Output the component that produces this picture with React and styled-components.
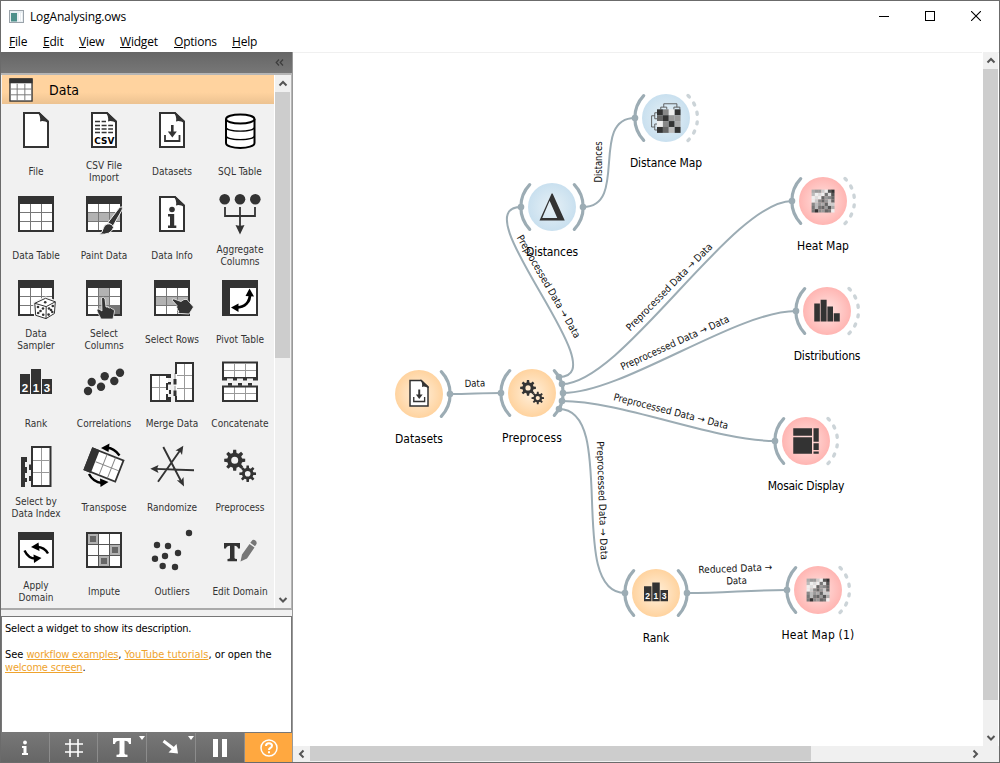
import React from "react";
import styled, { createGlobalStyle } from "styled-components";

const INK = "#333";
const LINK = "#9cacb4";
const TAHOMA = `"DejaVu Sans Condensed", "DejaVu Sans", sans-serif`;

const GlobalStyle = createGlobalStyle`
  * { box-sizing: border-box; }
  body { margin: 0; background: #fff; overflow: hidden; }
`;

const Window = styled.div`
  width: 1000px;
  height: 763px;
  display: flex;
  flex-direction: column;
  border: 1px solid #6b6b6b;
  background: #fff;
  color: #000;
  font-family: ${TAHOMA};
  font-stretch: condensed;
  overflow: hidden;
`;

const TitleBar = styled.header`
  height: 30px;
  flex: none;
  display: flex;
  align-items: center;
  padding-left: 8px;
  font: 12px "Open Sans", "Noto Sans", sans-serif;
`;

const Title = styled.span`
  flex: 1;
  margin-left: 6px;
  letter-spacing: -0.17px;
`;

const WindowButton = styled.span`
  width: 46px;
  height: 29px;
  display: flex;
  align-items: center;
  justify-content: center;
`;

const MenuBar = styled.nav`
  height: 21px;
  flex: none;
  display: flex;
  align-items: center;
  padding-left: 8px;
  font: 12px "Open Sans", "Noto Sans", sans-serif;
`;

const MenuItem = styled.div`
  width: ${(p) => p.$w}px;
  letter-spacing: -0.2px;
  white-space: nowrap;
  &::first-letter { text-decoration: underline; }
`;

const Body = styled.div`
  flex: 1;
  display: flex;
  min-height: 0;
`;

const Sidebar = styled.aside`
  width: 292px;
  flex: none;
  display: flex;
  flex-direction: column;
  border-right: 1px solid #999;
  background: #f1f1f1;
`;

const DockHeader = styled.div`
  height: 21px;
  flex: none;
  display: flex;
  align-items: center;
  justify-content: flex-end;
  padding-right: 8px;
  background: linear-gradient(#666, #777);
`;

const Palette = styled.div`
  height: 537px;
  flex: none;
  display: flex;
  border-top: 2px solid #b5b5b5;
  border-bottom: 2px solid #aaa;
  border-right: 1px solid #b5b5b5;
`;

const PaletteContent = styled.div`
  width: 273px;
  padding-left: 1px;
`;

const CategoryHeader = styled.div`
  height: 29px;
  display: flex;
  align-items: center;
  gap: 16px;
  padding-left: 7px;
  background: linear-gradient(#ffd39f 60%, #ecc291);
  font-size: 14px;
`;

const WidgetGrid = styled.div`
  display: grid;
  grid-template-columns: repeat(4, 68px);
  grid-auto-rows: 84px;
`;

const WidgetCell = styled.div`
  display: flex;
  flex-direction: column;
  align-items: center;
  padding-top: 3px;
`;

const WidgetIcon = styled.svg`
  width: 48px;
  height: 48px;
  flex: none;
`;

const WidgetLabel = styled.div`
  height: 33px;
  flex: none;
  display: flex;
  align-items: center;
  padding-top: 1px;
  text-align: center;
  white-space: pre;
  font-size: 10px;
  line-height: 12px;
  color: #333;
`;

const VScroll = styled.div`
  width: 16px;
  flex: none;
  display: flex;
  flex-direction: column;
  align-items: center;
  background: #f0f0f0;
  border-left: 1px solid #fff;
`;

const VThumb = styled.div`
  width: 100%;
  height: ${(p) => p.$h}px;
  background: #cdcdcd;
`;

const ScrollArrow = styled.div`
  width: ${(p) => p.$w || 15}px;
  height: ${(p) => p.$h || 17}px;
  flex: none;
  display: flex;
  align-items: center;
  justify-content: center;
`;

const Spacer = styled.div`
  flex: 1;
`;

const Description = styled.div`
  margin-top: 6px;
  height: 117px;
  flex: none;
  padding: 5px 3px;
  border: 1px solid #777;
  background: #fff;
  font-size: 11px;
  line-height: 13px;
  white-space: nowrap;
`;

const Hint = styled.p`
  margin: 0 0 13px;
  letter-spacing: ${(p) => p.$track}px;
`;

const DocLink = styled.a`
  color: #efa32d;
  text-decoration: underline;
  letter-spacing: ${(p) => p.$track}px;
`;

const ToolBar = styled.div`
  height: 29px;
  flex: none;
  display: flex;
  background: linear-gradient(#777, #666);
`;

const ToolButton = styled.div`
  width: ${(p) => p.$w}px;
  display: flex;
  align-items: center;
  justify-content: center;
  background: ${(p) => (p.$active ? "#ffa840" : "transparent")};
  border-right: ${(p) => (p.$active ? "none" : "1px solid #8c8c8c")};
`;

const CanvasPane = styled.main`
  flex: 1;
  display: flex;
  flex-direction: column;
  box-shadow: inset 0 1px #f0f0f0;
`;

const CanvasRow = styled.div`
  flex: 1;
  display: flex;
`;

const Canvas = styled.div`
  width: 689px;
  position: relative;
`;

const HScroll = styled.div`
  height: 16px;
  flex: none;
  display: flex;
  background: #f0f0f0;
`;

const HThumb = styled.div`
  width: 501px;
  height: 15px;
  background: #cdcdcd;
`;

const Links = styled.svg`
  position: absolute;
  left: 0;
  top: 0;
`;

const Node = styled.div`
  position: absolute;
  left: ${(p) => p.$x - 293 - 50}px;
  top: ${(p) => p.$y - 52 - 34}px;
  width: 100px;
  display: flex;
  flex-direction: column;
  align-items: center;
`;

const NodeLabel = styled.div`
  margin-top: 3px;
  font-size: 12px;
  line-height: 16px;
  white-space: nowrap;
  letter-spacing: ${(p) => p.$track ?? -0.1}px;
`;

/* ---------- icons, drawn on a 48 x 48 grid ---------- */

const Page = ({ children }) => (
  <g>
    <path d="M12 6H27L36 15V40H12Z" fill="#fff" stroke={INK} strokeWidth="2" />
    <path d="M25.5 5H27L37 14V16Q31 13 28 14.5Q29 9 25.5 5Z" fill={INK} />
    {children}
  </g>
);

const Table = ({ children, over }) => (
  <g>
    <rect x="7" y="6" width="34" height="34" fill="#fff" />
    {children}
    <path d="M8 21.5H40M8 30.5H40M18.5 13V39M29.5 13V39" stroke="#777" strokeWidth="1" fill="none" />
    <rect x="7" y="6" width="34" height="34" fill="none" stroke={INK} strokeWidth="2" />
    <rect x="6" y="5" width="36" height="8" fill={INK} />
    {over}
  </g>
);

const gearPath = (cx, cy, r, inner, teeth) => {
  let d = "";
  for (let i = 0; i < teeth; i++) {
    const a = (i / teeth) * Math.PI * 2;
    const s = Math.PI / teeth;
    [[-0.62, inner], [-0.36, r], [0.36, r], [0.62, inner]].forEach(([k, rad], j) => {
      const t = a + k * s;
      d += `${i === 0 && j === 0 ? "M" : "L"}${(cx + rad * Math.cos(t)).toFixed(2)} ${(cy + rad * Math.sin(t)).toFixed(2)}`;
    });
  }
  return d + "Z";
};

const Gears = () => (
  <g fill={INK}>
    <path fillRule="evenodd" d={gearPath(18.7, 17.3, 10.6, 7.6, 8) + "M22.2 17.3a3.5 3.5 0 1 0-7 0a3.5 3.5 0 1 0 7 0Z"} />
    <path fillRule="evenodd" d={gearPath(31.7, 30.7, 8.4, 5.8, 8) + "M34.5 30.7a2.8 2.8 0 1 0-5.6 0a2.8 2.8 0 1 0 5.6 0Z"} />
  </g>
);

const Podium = () => (
  <g>
    <path d="M8 15H18V35H8ZM19 10H29V35H19ZM30 20H40V35H30Z" fill={INK} />
    <g fill="#fff" fontFamily="Liberation Sans, sans-serif" fontWeight="700" fontSize="11.5" textAnchor="middle">
      <text x="13" y="32.5">2</text>
      <text x="24" y="32.5">1</text>
      <text x="35" y="32.5">3</text>
    </g>
  </g>
);

const Dots = ({ points, r }) => (
  <g fill={INK}>{points.map(([x, y]) => <circle key={`${x}-${y}`} cx={x} cy={y} r={r} />)}</g>
);

const Download = () => (
  <Page>
    <path d="M24.3 18V26" stroke={INK} strokeWidth="2.6" />
    <path d="M19.8 24.5H28.8L24.3 30.5Z" fill={INK} />
    <path d="M17 28V34H31.5V28" fill="none" stroke={INK} strokeWidth="1.8" />
  </Page>
);

const shade = (c) => `#${c}${c}${c}`;

const Heat = () => (
  <g>
    {["a99ce53", "bede7d5", "ede6986", "ec869c6", "8b9a6cc", "7b7695a", "738967e"].map((row, y) =>
      [...row].map((c, x) => (
        <rect key={`${x}${y}`} x={8.8 + x * 4.35} y={8.8 + y * 4.35} width="4.45" height="4.45" fill={shade(c)} />
      ))
    )}
  </g>
);

const DistanceMap = () => (
  <g>
    {["38e3", "6399", "e83a", "36b3"].map((row, y) =>
      [...row].map((c, x) => (
        <rect key={`${x}${y}`} x={12 + x * 7.85} y={12.4 + y * 7.85} width="7.9" height="7.9" fill={shade(c)} />
      ))
    )}
    <path
      d="M17 12.4V9.5H25V12.4M34.5 12.4V9.5H42.5V12.4M21 9.5V5H38.5V9.5M12 17H9V25H12M12 32H9V40H12M9 21H4.8V36H9"
      fill="none"
      stroke="#555"
      strokeWidth="1.2"
    />
  </g>
);

const icons = {
  file: <Page />,
  csv: (
    <Page>
      <path d="M15 14.5H26M15 18.5H33M15 22H33M15 25.5H33" stroke={INK} strokeWidth="1.7" strokeDasharray="5 1.6" />
      <text x="24.3" y="36.6" fontFamily="DejaVu Sans, sans-serif" fontWeight="700" fontSize="9" textAnchor="middle" textLength="20" lengthAdjust="spacingAndGlyphs">CSV</text>
    </Page>
  ),
  datasets: <Download />,
  sql: (
    <g fill="#fff" stroke="#000" strokeWidth="2">
      <path d="M10 12V36C10 42.5 38.5 42.5 38.5 36V12" />
      <path d="M10 20C10 25.5 38.5 25.5 38.5 20M10 28.5C10 34 38.5 34 38.5 28.5" fill="none" strokeWidth="1.2" />
      <ellipse cx="24.25" cy="12" rx="14.25" ry="4.6" />
    </g>
  ),
  table: <Table />,
  paint: (
    <Table
      over={
        <g stroke="#f2f2f2" strokeWidth="1">
          <path d="M39.5 16.5Q43.5 14.5 42 19L33 35L28 31.5Z" fill={INK} />
          <path d="M27 33Q32 32 33.5 36.5Q31 44.5 19 43Q23 41.5 23 38Q24 34 27 33Z" fill={INK} />
        </g>
      }
    >
      <rect x="8" y="22" width="32" height="9" fill="#b2b2b2" />
    </Table>
  ),
  info: (
    <Page>
      <circle cx="24" cy="18.5" r="2.8" fill={INK} />
      <path d="M20 23H26.2V34.5H28.3V37H20V34.5H22V25.5H20Z" fill={INK} />
    </Page>
  ),
  aggregate: (
    <g>
      <Dots r={5.3} points={[[8.7, 8.2], [24, 8.2], [39.3, 8.2]]} />
      <path d="M9 16V25H39V16M24 16V36" fill="none" stroke={INK} strokeWidth="1.8" />
      <path d="M19.5 34Q24 35.5 28.5 34L24 43.5Z" fill={INK} />
    </g>
  ),
  sampler: (
    <Table
      over={
        <g>
          <path d="M33.5 23L43.5 26.5L42.5 39L34 44L23.5 40.5L22.5 28Z" fill="#fff" stroke="#f2f2f2" strokeWidth="3" />
          <path d="M33.5 23.3L43.3 26.8L42.4 38.5L34 43.6L23.7 40.3L22.8 28.3ZM22.8 28.3L34.2 31.6L43.3 26.8M34.2 31.6L34 43.6" fill="#fff" stroke={INK} strokeWidth="1" strokeLinejoin="round" />
          <Dots r={1.3} points={[[33.2, 27.3], [26, 32], [31, 33.5], [28.5, 36], [26.2, 38], [31.2, 39.8], [37, 33.5], [40.8, 31], [39, 35], [36.6, 39.6], [40.3, 37]]} />
        </g>
      }
    />
  ),
  columns: (
    <Table
      over={
        <path d="M21.5 23Q23.5 21 25 24L26 32Q28 31.5 29 33Q31 32 32 34Q34 33.5 34.5 36L33 44H21L17.5 37Q16 33.5 19 34L22 36Z" fill={INK} stroke="#f2f2f2" strokeWidth=".8" />
      }
    >
      <rect x="18.5" y="13" width="11" height="27" fill="#b2b2b2" />
      <rect x="30" y="31" width="11" height="9" fill="#777" />
    </Table>
  ),
  rows: (
    <Table
      over={
        <path d="M24.5 25.5Q23.5 23.5 26 24L33 26.5Q36 23.5 39 24.5L45.5 32L41 39L32.5 38.5Q28.5 38.5 31 36Q28 35.5 29.5 33.5Q28 32.5 29 30.5Z" fill={INK} stroke="#f2f2f2" strokeWidth=".8" />
      }
    >
      <rect x="8" y="22" width="32" height="9" fill="#b2b2b2" />
    </Table>
  ),
  pivot: (
    <g>
      <rect x="6" y="5" width="36" height="36" fill={INK} />
      <rect x="14" y="13" width="26" height="26" fill="#fff" />
      <path d="M34 18C34.5 27 29 32.5 20 32.5" fill="none" stroke="#000" strokeWidth="2.8" />
      <path d="M33.5 13.5L38 21.5L29.5 21Z M15 32.5L22.5 28.5V37Z" fill="#000" />
    </g>
  ),
  rank: <Podium />,
  correlations: <Dots r={4.2} points={[[8, 32], [11.7, 23], [21, 27.7], [24.7, 17.3], [34.3, 22], [40, 13.7]]} />,
  merge: (
    <g>
      <path d="M20 16H3V42H20" fill="#fff" stroke={INK} strokeWidth="2" />
      <path d="M11.5 17V41M4 28.5H20" stroke="#999" strokeWidth="1" />
      <path d="M18 15H23V19H20V23H23V25.5H20V31H23V35H20V38H23V43H18V35H21V31H18V24H20V19H18Z" fill={INK} />
      <path d="M28 14V4H45V42H28V37" fill="#fff" stroke={INK} strokeWidth="2" />
      <path d="M36.5 5V41M29 16.5H44M29 29.5H44" stroke="#999" strokeWidth="1" />
      <path d="M27 14V22M27 27V34" stroke="#999" strokeWidth="1" />
      <path d="M25.5 20H28.5V25.5H25.5ZM25.5 31.5H28.5V37H25.5ZM27 3H29V15H27Z" fill={INK} />
    </g>
  ),
  concatenate: (
    <g fill="#fff" stroke={INK} strokeWidth="2">
      <path d="M7 20V3.5H41V20" />
      <path d="M8 11.5H40M18.5 4V18M29.5 4V18" stroke="#999" strokeWidth="1" />
      <path d="M7 27V42H41V27" />
      <path d="M8 34.5H40M18.5 28V41M29.5 28V41" stroke="#999" strokeWidth="1" />
      <path d="M6 18.8H42" strokeWidth="1.6" />
      <path d="M6 20.2H11M17 20.2H21M27 20.2H31M37 20.2H42" strokeWidth="2.6" />
      <path d="M6 27.5H42" strokeWidth="1.8" />
      <path d="M12 25.4H16M22 25.4H26M32 25.4H36" strokeWidth="2.8" />
    </g>
  ),
  index: (
    <g>
      <path d="M9 14H15V19H13V24H15V30H13V35H15V39H13V44H9Z" fill={INK} />
      <rect x="20" y="4" width="18.5" height="39" fill="#fff" stroke={INK} strokeWidth="2" />
      <path d="M29.5 5V42M21 17.5H38M21 29.5H38" stroke="#999" strokeWidth="1" />
      <path d="M17 21.5H20V27H17ZM17 33H20V38H17Z" fill={INK} />
    </g>
  ),
  transpose: (
    <g>
      <g transform="rotate(21.5 24 22)">
        <rect x="7.5" y="10.7" width="33" height="22.6" fill="#fff" stroke={INK} strokeWidth="1.8" />
        <rect x="6.6" y="9.8" width="8" height="24.4" fill={INK} />
        <path d="M23 11V33M32 11V33M15 22H40" stroke="#888" strokeWidth="1" />
      </g>
      <path d="M39.5 12.5Q34 5 27 4.8M9 31Q13 39 22 40" fill="none" stroke="#000" strokeWidth="2.4" />
      <path d="M21 5L29.5 .5L28.5 9ZM28.5 39L20.5 44L20 35.5Z" fill="#000" />
    </g>
  ),
  randomize: (
    <g>
      <path d="M15.3 4L33.5 39M10 38.7L32 7.5M46 27.3L7 25.9" stroke={INK} strokeWidth="1.9" fill="none" />
      <path d="M36 43.5L28.8 37.2L33 37.5L35.5 34ZM35.3 2.7L34 12L31.8 8.3L27.5 7.5ZM2.3 25.7L10.5 22L9 26L10.5 30Z" fill={INK} />
    </g>
  ),
  preprocess: <Gears />,
  apply: (
    <g>
      <rect x="7" y="6" width="34" height="34" fill="#fff" stroke={INK} strokeWidth="2" />
      <rect x="6" y="5" width="36" height="8" fill={INK} />
      <path d="M36 26.5Q32 19.5 24 20M12.5 23.5Q16.5 32 24.5 31.5" fill="none" stroke="#000" strokeWidth="2.4" />
      <path d="M19 20L26.5 15.5L27.5 24ZM29.5 31L22 36L21.5 27.5Z" fill="#000" />
    </g>
  ),
  impute: (
    <g>
      <rect x="7" y="6" width="34" height="34" fill="#fff" />
      <path d="M7 6H18V17H7ZM30 17H41V28H30ZM18.5 28H29.5V40H18.5Z" fill="#b2b2b2" />
      <path d="M10 9H16V15H10ZM32 20H38V26H32ZM21 31H27V37H21Z" fill="#666" />
      <path d="M8 17.5H40M8 28.5H40M18.5 7V39M29.5 7V39" stroke="#555" strokeWidth="1" />
      <rect x="7" y="6" width="34" height="34" fill="none" stroke={INK} strokeWidth="2" />
    </g>
  ),
  outliers: <Dots r={3.2} points={[[41, 6], [9, 18], [20, 19], [30, 26], [17, 29], [7, 31.7], [14.7, 39], [27, 40]]} />,
  edit: (
    <g>
      <path d="M8 16H24V21.5H22Q21.5 18.7 18.5 18.7V31Q18.5 32 21 32V34.3H11.5V32Q14 32 14 31V18.7Q10.5 18.7 10 21.5H8Z" fill={INK} />
      <path d="M24.5 34.5L26 27.5L33.5 17L38.5 20.5L31 31.5Z M34.3 15.8L36.5 13Q38 12.3 40 14Q41 15.5 40.5 17L39 19.3Z" fill="#777" />
    </g>
  ),
  delta: <path fillRule="evenodd" d="M23.5 6H24.8L41 42H7.3ZM20.8 15.5L11 38.5H31Z" fill={INK} />,
  distanceMap: <DistanceMap />,
  heat: <Heat />,
  distributions: <path d="M6 17H13.5V41H6ZM14.5 12H22.5V41H14.5ZM23.5 21H31V41H23.5ZM32 30H40V41H32Z" fill={INK} transform="translate(1 -3)" />,
  mosaic: <path d="M7 7H32V17H7ZM7 19H32V41H7ZM34 7H41V25H34ZM34 27H41V36H34ZM34 38H41V41H34Z" fill={INK} />,
};

const Chevron = ({ dir }) => {
  const paths = { up: "M1.5 6.5L5 3L8.5 6.5", down: "M1.5 3L5 6.5L8.5 3", left: "M6.5 1.5L3 5L6.5 8.5", right: "M3.5 1.5L7 5L3.5 8.5" };
  return (
    <svg width="10" height="10" viewBox="0 0 10 10">
      <path d={paths[dir]} fill="none" stroke="#555" strokeWidth="2" />
    </svg>
  );
};

/* ---------- data ---------- */

const menu = [["File", 34], ["Edit", 36], ["View", 41], ["Widget", 54], ["Options", 58], ["Help", 40]];

const widgets = [
  ["file", "File"], ["csv", "CSV File\nImport"], ["datasets", "Datasets"], ["sql", "SQL Table"],
  ["table", "Data Table"], ["paint", "Paint Data"], ["info", "Data Info"], ["aggregate", "Aggregate\nColumns"],
  ["sampler", "Data\nSampler"], ["columns", "Select\nColumns"], ["rows", "Select Rows"], ["pivot", "Pivot Table"],
  ["rank", "Rank"], ["correlations", "Correlations"], ["merge", "Merge Data"], ["concatenate", "Concatenate"],
  ["index", "Select by\nData Index"], ["transpose", "Transpose"], ["randomize", "Randomize"], ["preprocess", "Preprocess"],
  ["apply", "Apply\nDomain"], ["impute", "Impute"], ["outliers", "Outliers"], ["edit", "Edit Domain"],
];

const nodes = [
  { x: 419, y: 393.5, icon: "datasets", label: "Datasets", tone: "orange", output: "solid", track: 0 },
  { x: 532, y: 393, icon: "preprocess", label: "Preprocess", tone: "orange", input: true, output: "solid", track: 0.12 },
  { x: 552, y: 207, icon: "delta", label: "Distances", tone: "blue", input: true, output: "solid" },
  { x: 666, y: 118, icon: "distanceMap", label: "Distance Map", tone: "blue", input: true, output: "dashed" },
  { x: 823, y: 201, icon: "heat", label: "Heat Map", tone: "pink", input: true, output: "dashed", track: 0 },
  { x: 827, y: 311, icon: "distributions", label: "Distributions", tone: "pink", input: true, output: "dashed", track: -0.15 },
  { x: 806, y: 441, icon: "mosaic", label: "Mosaic Display", tone: "pink", input: true, output: "dashed", track: -0.28 },
  { x: 656, y: 593, icon: "rank", label: "Rank", tone: "orange", input: true, output: "solid" },
  { x: 818, y: 590, icon: "heat", label: "Heat Map (1)", tone: "pink", input: true, output: "dashed", track: 0.2 },
];

const links = [
  [450, 394, 501, 393, 20],
  [559, 377, 521, 207, 61],
  [583, 207, 635, 118, 46],
  [562, 384, 792, 201, 60],
  [563, 393, 796, 311, 60],
  [562, 401, 775, 441, 60],
  [559, 409, 625, 593, 60],
  [687, 593, 787, 590, 40],
];

const linkLabels = [
  [464.7, 387, -1.5, 20.5, "Data"],
  [516.5, 237.5, 60, 117, "Preprocessed Data → Data"],
  [602.3, 182.5, -90, 41, "Distances"],
  [630.3, 331.5, -45.5, 118, "Preprocessed Data → Data"],
  [622.5, 370.3, -24.4, 118, "Preprocessed Data → Data"],
  [613, 400, 14.3, 118, "Preprocessed Data → Data"],
  [596.7, 441.5, 88, 118.5, "Preprocessed Data → Data"],
  [698.5, 573.3, -2.2, 74, "Reduced Data →"],
  [726.5, 584.5, -2.2, 20.5, "Data"],
];

const tones = {
  orange: ["#fff0dc", "#ffd39f"],
  blue: ["#e6f0f6", "#c9e0ef"],
  pink: ["#ffe4e2", "#ffb5b2"],
};

const NodeShape = ({ node }) => (
  <svg width="68" height="68" viewBox="-34 -34 68 68">
    <circle r="24" fill={`url(#${node.tone})`} />
    {node.input && (
      <path d="M-22.3-22.3A32.5 32.5 0 0 0-22.3 22.3" fill="none" stroke={LINK} strokeWidth="3.2" strokeLinecap="round" />
    )}
    {node.output === "solid" && (
      <path d="M22.3-22.3A32.5 32.5 0 0 1 22.3 22.3" fill="none" stroke={LINK} strokeWidth="3.2" strokeLinecap="round" />
    )}
    {node.output === "dashed" && (
      <path
        d="M22-22.5A31.5 31.5 0 0 1 22 22.5"
        fill="none"
        stroke="#ccd4d8"
        strokeWidth="3.4"
        strokeLinecap="round"
        strokeDasharray="2 7.6"
      />
    )}
    <svg x="-18" y="-18" width="36" height="36" viewBox="0 0 48 48">{icons[node.icon]}</svg>
  </svg>
);

export default function App() {
  return (
    <Window>
      <GlobalStyle />
      <TitleBar>
        <svg width="15" height="13" viewBox="0 0 15 13">
          <rect x=".5" y=".5" width="14" height="12" fill="#e8eef2" stroke="#9aa3aa" />
          <rect x="2" y="3" width="6" height="8.5" fill="#4d8f8a" />
          <path d="M10.5 3V11M12.5 3V11" stroke="#fff" />
        </svg>
        <Title>LogAnalysing.ows</Title>
        <WindowButton><svg width="10" height="10"><path d="M0 5.5H10" stroke="#000" /></svg></WindowButton>
        <WindowButton><svg width="10" height="10"><rect x=".5" y=".5" width="9" height="9" fill="none" stroke="#000" /></svg></WindowButton>
        <WindowButton><svg width="10" height="10"><path d="M0 0L10 10M10 0L0 10" stroke="#000" strokeWidth="1.1" /></svg></WindowButton>
      </TitleBar>
      <MenuBar>
        {menu.map(([name, w]) => <MenuItem key={name} $w={w}>{name}</MenuItem>)}
      </MenuBar>
      <Body>
        <Sidebar>
          <DockHeader>
            <svg width="9" height="7" viewBox="0 0 9 7"><path d="M4 .5L1.2 3.5L4 6.5M8 .5L5.2 3.5L8 6.5" fill="none" stroke="#3c3c3c" strokeWidth="1.2" /></svg>
          </DockHeader>
          <Palette>
            <PaletteContent>
              <CategoryHeader>
                <svg width="24" height="24" viewBox="0 0 25 25">
                  <rect x="1" y="1" width="23" height="23" fill="#fff" stroke={INK} strokeWidth="1.4" />
                  <rect x=".5" y=".5" width="24" height="5" fill={INK} />
                  <path d="M2 11.5H24M2 17.5H24M8.5 6V24M16.5 6V24" stroke="#777" />
                </svg>
                Data
              </CategoryHeader>
              <WidgetGrid>
                {widgets.map(([icon, label]) => (
                  <WidgetCell key={label}>
                    <WidgetIcon viewBox="0 0 48 48">{icons[icon]}</WidgetIcon>
                    <WidgetLabel>{label}</WidgetLabel>
                  </WidgetCell>
                ))}
              </WidgetGrid>
            </PaletteContent>
            <VScroll>
              <ScrollArrow><Chevron dir="up" /></ScrollArrow>
              <VThumb $h={266} />
              <Spacer />
              <ScrollArrow><Chevron dir="down" /></ScrollArrow>
            </VScroll>
          </Palette>
          <Description>
            <Hint $track={-0.2}>Select a widget to show its description.</Hint>
            <Hint $track={-0.04}>
              See <DocLink $track={-0.2}>workflow examples</DocLink>, <DocLink $track={0}>YouTube tutorials</DocLink>, or open the<br />
              <DocLink $track={-0.2}>welcome screen</DocLink>.
            </Hint>
          </Description>
          <ToolBar>
            <ToolButton $w={49}>
              <svg width="8" height="16" viewBox="0 0 8 16" fill="#fff"><circle cx="4" cy="2.5" r="1.9" /><path d="M1 6H5.5V13H7V15H1V13H2.5V8H1Z" /></svg>
            </ToolButton>
            <ToolButton $w={48}>
              <svg width="18" height="18" viewBox="0 0 18 18"><path d="M5 0V18M13 0V18M0 5H18M0 13H18" stroke="#fff" strokeWidth="1.6" /></svg>
            </ToolButton>
            <ToolButton $w={49}>
              <svg width="48" height="28" viewBox="-4 0 48 28" fill="#fff"><path d="M11 4H29V10H27Q26.5 6.7 22.5 6.7V19.5Q22.5 20.7 25.5 20.7V23H14.5V20.7Q17.5 20.7 17.5 19.5V6.7Q13.5 6.7 13 10H11Z" /><path d="M37 2H43L40 6Z" /></svg>
            </ToolButton>
            <ToolButton $w={49}>
              <svg width="48" height="28" viewBox="-4 0 48 28" fill="#fff"><path d="M12.5 7L23 15" stroke="#fff" strokeWidth="3" /><path d="M27 19.5L17.5 18.5L25.5 10Z" /><path d="M37 2H43L40 6Z" /></svg>
            </ToolButton>
            <ToolButton $w={49}>
              <svg width="16" height="18" viewBox="0 0 16 18" fill="#fff"><path d="M1 0H6V18H1ZM10 0H15V18H10Z" /></svg>
            </ToolButton>
            <ToolButton $w={47} $active>
              <svg width="20" height="20" viewBox="0 0 20 20" fill="none" stroke="#fff"><circle cx="10" cy="10" r="8" strokeWidth="1.5" /><path d="M7 8Q7 5.3 10 5.3Q13 5.3 13 7.8Q13 9.2 11.3 10Q10 10.7 10 12" strokeWidth="2" /><path d="M10 13.3V15.3" strokeWidth="2" /></svg>
            </ToolButton>
          </ToolBar>
        </Sidebar>
        <CanvasPane>
          <CanvasRow>
            <Canvas>
              <Links width="689" height="693" viewBox="293 52 689 693">
                <defs>
                  {Object.entries(tones).map(([name, [inner, outer]]) => (
                    <radialGradient key={name} id={name}>
                      <stop offset="0" stopColor={inner} />
                      <stop offset="1" stopColor={outer} />
                    </radialGradient>
                  ))}
                </defs>
                {links.map(([x1, y1, x2, y2, d]) => (
                  <g key={`${y1}-${x2}`}>
                    <path d={`M${x1} ${y1}C${x1 + d} ${y1} ${x2 - d} ${y2} ${x2} ${y2}`} fill="none" stroke={LINK} strokeWidth="2" />
                    <circle cx={x1} cy={y1} r="3.3" fill={LINK} />
                    <circle cx={x2} cy={y2} r="3.3" fill={LINK} />
                  </g>
                ))}
              </Links>
              {nodes.map((node) => (
                <Node key={node.label} $x={node.x} $y={node.y}>
                  <NodeShape node={node} />
                  <NodeLabel $track={node.track}>{node.label}</NodeLabel>
                </Node>
              ))}
              <Links width="689" height="693" viewBox="293 52 689 693">
                {linkLabels.map(([x, y, angle, length, text]) => (
                  <text
                    key={`${x}-${y}`}
                    transform={`translate(${x} ${y}) rotate(${angle})`}
                    textLength={length}
                    lengthAdjust="spacingAndGlyphs"
                    fontSize="10"
                    fill="#111"
                  >
                    {text}
                  </text>
                ))}
              </Links>
            </Canvas>
            <VScroll>
              <ScrollArrow><Chevron dir="up" /></ScrollArrow>
              <VThumb $h={631} />
              <Spacer />
              <ScrollArrow><Chevron dir="down" /></ScrollArrow>
            </VScroll>
          </CanvasRow>
          <HScroll>
            <ScrollArrow $w={17} $h={15}><Chevron dir="left" /></ScrollArrow>
            <HThumb />
            <Spacer />
            <ScrollArrow $w={17} $h={15}><Chevron dir="right" /></ScrollArrow>
            <ScrollArrow $w={16} $h={15} />
          </HScroll>
        </CanvasPane>
      </Body>
    </Window>
  );
}
